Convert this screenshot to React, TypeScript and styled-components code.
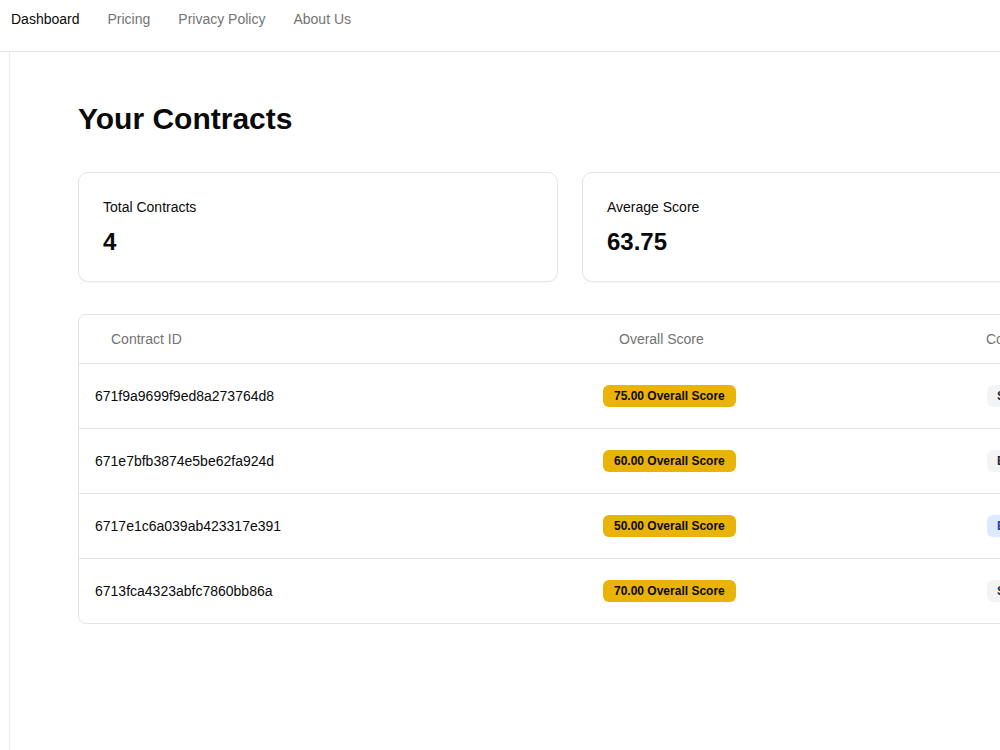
import React from "react";
import styled, { createGlobalStyle } from "styled-components";

const GlobalStyle = createGlobalStyle`
	html, body {
		margin: 0;
		padding: 0;
		overflow: hidden;
		background: #ffffff;
		font-family: "Liberation Sans", Arial, sans-serif;
		color: #0a0a0a;
	}
	* {
		box-sizing: border-box;
	}
`;

const Header = styled.header`
	display: flex;
	align-items: flex-start;
	gap: 28px;
	height: 52px;
	padding: 9px 0 0 11px;
	border-bottom: 1px solid #e5e5e5;
`;

const NavLink = styled.a<{ active?: boolean }>`
	font-size: 14px;
	line-height: 20px;
	color: ${(props) => (props.active ? "#0a0a0a" : "#737373")};
	text-decoration: none;
	cursor: pointer;
`;

const Layout = styled.div`
	display: flex;
	min-height: calc(100vh - 52px);
`;

const Sidebar = styled.aside`
	flex: 0 0 10px;
	border-right: 1px solid #ebebeb;
`;

const Main = styled.main`
	flex: 1;
	padding: 49px 0 48px 68px;
`;

const Title = styled.h1`
	margin: 0 0 35px;
	font-size: 30px;
	line-height: 36px;
	font-weight: 700;
`;

const Cards = styled.div`
	display: grid;
	grid-template-columns: 480px 480px;
	gap: 24px;
	margin-bottom: 32px;
`;

const Card = styled.div`
	border: 1px solid #e5e5e5;
	border-radius: 10px;
	padding: 24px;
	height: 110px;
	box-shadow: 0 1px 2px rgba(0, 0, 0, 0.04);
`;

const CardLabel = styled.div`
	font-size: 14px;
	line-height: 20px;
`;

const CardValue = styled.div`
	margin-top: 9px;
	font-size: 24px;
	line-height: 32px;
	font-weight: 700;
`;

const Table = styled.div`
	width: 1100px;
	border: 1px solid #e5e5e5;
	border-radius: 8px;
	overflow: hidden;
`;

const Row = styled.div<{ head?: boolean }>`
	display: grid;
	grid-template-columns: 508px 367px 1fr;
	align-items: center;
	height: ${(props) => (props.head ? "48px" : "65px")};
	border-top: ${(props) => (props.head ? "none" : "1px solid #e5e5e5")};
`;

const HeadCell = styled.div`
	padding-left: 32px;
	font-size: 14px;
	color: #737373;
	white-space: nowrap;
`;

const Cell = styled.div<{ pad?: number }>`
	padding-left: ${(props) => props.pad ?? 16}px;
	font-size: 14px;
	white-space: nowrap;
`;

const ScoreBadge = styled.span`
	display: inline-flex;
	align-items: center;
	height: 22px;
	padding: 0 11px;
	border-radius: 6px;
	background: #eab308;
	color: #0a0a0a;
	font-size: 12px;
	font-weight: 700;
`;

const TypeBadge = styled.span<{ tone: "grey" | "blue" }>`
	display: inline-flex;
	align-items: center;
	height: 22px;
	padding: 0 10px;
	border-radius: 6px;
	background: ${(props) => (props.tone === "blue" ? "#dbeafe" : "#f3f4f6")};
	color: ${(props) => (props.tone === "blue" ? "#1e40af" : "#1f2937")};
	font-size: 12px;
	font-weight: 600;
`;

const contracts = [
	{ id: "671f9a9699f9ed8a273764d8", score: "75.00", type: "Sales", tone: "grey" as const },
	{ id: "671e7bfb3874e5be62fa924d", score: "60.00", type: "Employment", tone: "grey" as const },
	{ id: "6717e1c6a039ab423317e391", score: "50.00", type: "Employment", tone: "blue" as const },
	{ id: "6713fca4323abfc7860bb86a", score: "70.00", type: "Sales", tone: "grey" as const },
];

export default function App() {
	return (
		<>
			<GlobalStyle />
			<Header>
				<NavLink active>Dashboard</NavLink>
				<NavLink>Pricing</NavLink>
				<NavLink>Privacy Policy</NavLink>
				<NavLink>About Us</NavLink>
			</Header>
			<Layout>
				<Sidebar />
				<Main>
					<Title>Your Contracts</Title>
					<Cards>
						<Card>
							<CardLabel>Total Contracts</CardLabel>
							<CardValue>4</CardValue>
						</Card>
						<Card>
							<CardLabel>Average Score</CardLabel>
							<CardValue>63.75</CardValue>
						</Card>
					</Cards>
					<Table>
						<Row head>
							<HeadCell>Contract ID</HeadCell>
							<HeadCell>Overall Score</HeadCell>
							<HeadCell>Contract Type</HeadCell>
						</Row>
						{contracts.map((c) => (
							<Row key={c.id}>
								<Cell>{c.id}</Cell>
								<Cell>
									<ScoreBadge>{c.score} Overall Score</ScoreBadge>
								</Cell>
								<Cell pad={33}>
									<TypeBadge tone={c.tone}>{c.type}</TypeBadge>
								</Cell>
							</Row>
						))}
					</Table>
				</Main>
			</Layout>
		</>
	);
}
